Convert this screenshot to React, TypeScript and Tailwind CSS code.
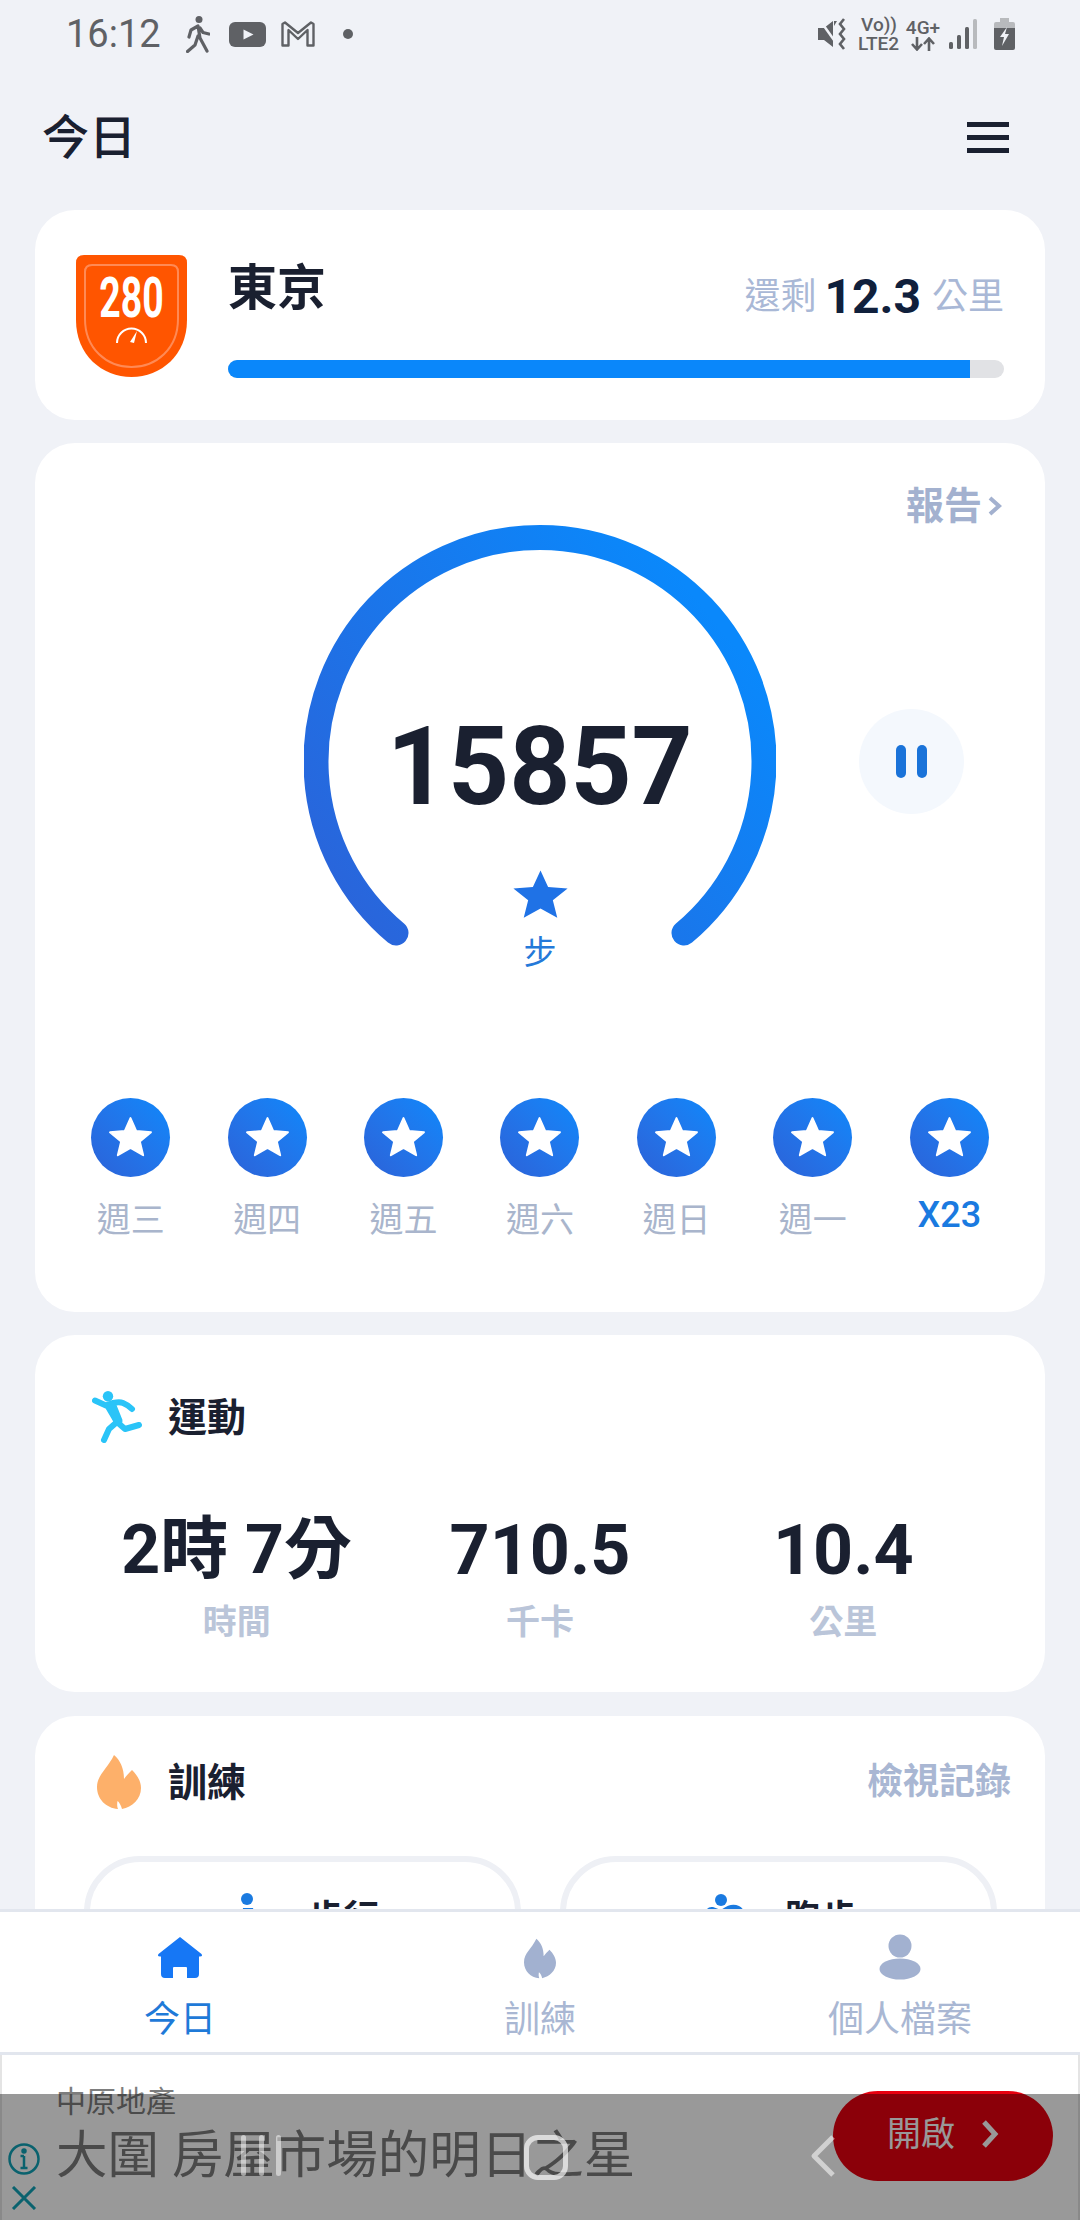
const STAR = "12,1.6 14.94,8.55 22.46,9.2 16.76,14.15 18.47,21.5 12,17.6 5.53,21.5 7.24,14.15 1.54,9.2 9.06,8.55";
const FLAME = "M17 0C23 5 27 13 27 24C29 21 32 18 35 15C40 20 44 26 44 33C44 44 35 52 25 54C24 50 22 47 20.5 46C20 49 20 52 21 54C9 53 0 44 0 32C0 20 11 13 17 0Z";
const DAYS = ["週三", "週四", "週五", "週六", "週日", "週一", "X23"];

function StatusBar() {
  return (
    <div className="flex h-[70px] shrink-0 items-center justify-between pb-[2px] pl-[66px] pr-[65px] text-[#5f6165]">
      <div className="flex items-center">
        <span className="text-[38px] leading-none">16:12</span>
        <svg className="ml-[25px]" width="24" height="37" viewBox="0 0 24 37" fill="none" stroke="#5f6165" strokeWidth="3.2" strokeLinecap="round" strokeLinejoin="round">
          <circle cx="13" cy="3.6" r="3.5" fill="#5f6165" stroke="none" />
          <path d="M12 10L5 14L3 21M12 10L14 22M14 12L17 16.5L23 18M14 22L21 35M12 20L9 29L1.5 35.5" />
        </svg>
        <svg className="ml-[19px]" width="37" height="25" viewBox="0 0 37 25">
          <rect width="37" height="25" rx="6" fill="#5f6165" />
          <path d="M14.5 7.5L24.5 12.5L14.5 17.5Z" fill="#f0f2f7" />
        </svg>
        <svg className="ml-[15px]" width="34" height="26" viewBox="0 0 34 26" fill="none" stroke="#5f6165" strokeWidth="2.4" strokeLinejoin="round">
          <path d="M1.5 24.5V3L4 1.5L17 12L30 1.5L32.5 3V24.5H26.5V9L17 18L7.5 9V24.5Z" />
        </svg>
        <span className="ml-[28px] h-[10px] w-[10px] rounded-full bg-[#5f6165]" />
      </div>
      <div className="flex items-center">
        <svg width="32" height="32" viewBox="0 0 32 32" fill="#5f6165">
          <path d="M0 10H6L15 3V29L6 22H0Z" />
          <path d="M1 1L21 29" stroke="#f0f2f7" strokeWidth="2.5" />
          <path d="M26 1L22 6L26 11L22 16L26 21L22 26L26 31" fill="none" stroke="#5f6165" strokeWidth="2.6" />
          <path d="M19 3L16 8V3Z" />
        </svg>
        <div className="ml-[8px] flex w-[41px] flex-col items-end text-[19px] font-medium leading-[19px]">
          <span className="pr-[2px]">Vo))</span>
          <span>LTE2</span>
        </div>
        <div className="ml-[8px] flex w-[32px] flex-col items-center text-[19px] font-medium leading-[19px]">
          <span>4G+</span>
          <svg width="24" height="14" viewBox="0 0 24 14" fill="none" stroke="#5f6165" strokeWidth="2.6">
            <path d="M6 0V12M1 7L6 12.5L11 7M18 14V2M13 7L18 1.5L23 7" />
          </svg>
        </div>
        <svg className="ml-[10px]" width="28" height="30" viewBox="0 0 28 30">
          <rect x="0" y="23" width="4" height="7" rx="1.5" fill="#5f6165" />
          <rect x="8" y="16" width="4" height="14" rx="1.5" fill="#5f6165" />
          <rect x="16" y="8" width="4" height="22" rx="1.5" fill="#5f6165" />
          <rect x="24" y="0" width="4" height="30" rx="1.5" fill="#b8babd" />
        </svg>
        <svg className="ml-[17px]" width="21" height="32" viewBox="0 0 21 32">
          <path d="M6 0H15V4H19Q21 4 21 6V10H0V6Q0 4 2 4H6Z" fill="#b8babd" />
          <path d="M0 10H21V30Q21 32 19 32H2Q0 32 0 30Z" fill="#5f6165" />
          <path d="M13 9L6 19H10L8 28L15 16H11Z" fill="#f0f2f7" />
        </svg>
      </div>
    </div>
  );
}

function Header() {
  return (
    <div className="flex h-[140px] shrink-0 items-center justify-between pb-[6px] pl-[42px] pr-[71px]">
      <span className="text-[47px] font-medium leading-none text-[#1a2030]">今日</span>
      <div className="flex w-[42px] flex-col gap-[8px]">
        <span className="h-[5px] bg-[#1a2030]" />
        <span className="h-[5px] bg-[#1a2030]" />
        <span className="h-[5px] bg-[#1a2030]" />
      </div>
    </div>
  );
}

function Badge() {
  return (
    <div className="relative h-[122px] w-[111px] shrink-0">
      <svg width="111" height="122" viewBox="0 0 111 122">
        <path d="M8 0H103Q111 0 111 8V65C111 100 85 122 55.5 122C26 122 0 100 0 65V8Q0 0 8 0Z" fill="#ff5500" />
        <path d="M16 10H95Q102 10 102 17V64C102 94 80 112 55.5 112C31 112 9 94 9 64V17Q9 10 16 10Z" fill="none" stroke="#ff8a55" strokeWidth="2" />
        <path d="M41 88A14.5 14.5 0 0 1 70 88" fill="none" stroke="#fff" strokeWidth="2" />
        <path d="M54 87L61 76L58 88Z" fill="#fff" />
      </svg>
      <span className="absolute left-0 top-[16px] w-full scale-x-[0.68] text-center text-[55px] font-bold leading-[55px] text-white">280</span>
    </div>
  );
}

function CityCard() {
  return (
    <div className="flex h-[210px] shrink-0 rounded-[40px] bg-white pl-[41px] pr-[41px] pt-[45px]">
      <Badge />
      <div className="ml-[41px] flex flex-1 flex-col">
        <div className="flex h-[60px] items-start justify-between">
          <span className="pt-[4px] text-[49px] font-bold leading-[60px] text-[#1a2030]">東京</span>
          <div className="flex items-center pt-[19px] text-[36px] leading-[46px] text-[#a9b8d6]">
            <span>還剩</span>
            <span className="ml-[8px] mr-[11px] text-[48px] font-bold text-[#10203c]">12.3</span>
            <span>公里</span>
          </div>
        </div>
        <div className="mt-[45px] h-[18px] overflow-hidden rounded-full bg-[#e1e2e5]">
          <div className="h-full w-[742px] bg-[#0a87fa]" />
        </div>
      </div>
    </div>
  );
}

function Gauge() {
  return (
    <div className="relative mt-[1px] h-[440px] w-full">
      <svg className="mx-auto block" width="472" height="440" viewBox="0 0 472 440" fill="none">
        <defs>
          <linearGradient id="arc" gradientUnits="userSpaceOnUse" x1="60" y1="420" x2="430" y2="120">
            <stop offset="0" stopColor="#2a64da" />
            <stop offset="1" stopColor="#0a88fb" />
          </linearGradient>
        </defs>
        <path d="M92 409A224 224 0 1 1 380 409" stroke="url(#arc)" strokeWidth="25" strokeLinecap="round" />
      </svg>
      <div className="absolute inset-x-0 top-0 flex flex-col items-center pt-[188px]">
        <span className="scale-x-[0.97] text-[110px] font-bold leading-[110px] text-[#1a2030]">15857</span>
        <svg className="mt-[47px]" width="57" height="50" viewBox="1 1 22 21" preserveAspectRatio="none">
          <polygon points={STAR} fill="#1f72e6" />
        </svg>
        <span className="mt-[17px] text-[33px] leading-[33px] text-[#2479d9]">步</span>
      </div>
      <div className="absolute left-[824px] top-[185px] flex h-[105px] w-[105px] items-center justify-center gap-[11px] rounded-full bg-[#f4f8fd]">
        <span className="h-[33px] w-[10px] rounded-full bg-[#1a73d9]" />
        <span className="h-[33px] w-[10px] rounded-full bg-[#1a73d9]" />
      </div>
    </div>
  );
}

function StepsCard() {
  return (
    <div className="mt-[23px] h-[869px] shrink-0 rounded-[40px] bg-white">
      <div className="flex justify-end pr-[43px] pt-[46px] text-[#a3b1cf]">
        <div className="flex h-[34px] items-center gap-[6px] text-[38px] font-bold leading-none">
          <span>報告</span>
          <svg width="14" height="20" viewBox="0 0 14 20" fill="none" stroke="#a3b1cf" strokeWidth="4">
            <path d="M2 2L11 10L2 18" />
          </svg>
        </div>
      </div>
      <Gauge />
      <div className="mt-[134px] grid grid-cols-7 px-[27.5px]">
        {DAYS.map((d, i) => (
          <div key={d} className="flex flex-col items-center">
            <div className="flex h-[79px] w-[79px] items-center justify-center rounded-full bg-linear-to-tr from-[#2b62d8] to-[#0a88fb]">
              <svg width="47" height="45" viewBox="0 0 24 24" preserveAspectRatio="none">
                <polygon points={STAR} fill="#fff" stroke="#fff" strokeWidth="1" strokeLinejoin="round" />
              </svg>
            </div>
            {i === 6 ? (
              <span className="mt-[20px] text-[36px] font-medium leading-[36px] text-[#1a7ae0]">{d}</span>
            ) : (
              <span className="mt-[26px] text-[34px] leading-[34px] text-[#a9b5cc]">{d}</span>
            )}
          </div>
        ))}
      </div>
    </div>
  );
}

function ExerciseCard() {
  return (
    <div className="mt-[23px] h-[357px] shrink-0 rounded-[40px] bg-white pt-[56px]">
      <div className="flex items-center pl-[57px]">
        <svg width="52" height="53" viewBox="0 0 52 53" fill="none" stroke="#2ac4f8" strokeWidth="6" strokeLinecap="round" strokeLinejoin="round">
          <circle cx="16" cy="5.2" r="5.2" fill="#2ac4f8" stroke="none" />
          <path d="M3 9.5L14 14.5C20 12 26 10 31 12C36 14 39 17 40 18M15 14L25 31L33 38L47 34M25 31L17 38L12 49" />
          <path d="M20 15L26 30" strokeWidth="9" />
        </svg>
        <span className="ml-[24px] pt-[2px] text-[39px] font-bold leading-none text-[#1a2030]">運動</span>
      </div>
      <div className="mt-[72px] grid grid-cols-3 px-[50px]">
        <div className="flex flex-col items-center">
          <span className="text-[68px] font-bold leading-[68px] text-[#1a2030]">2時 7分</span>
          <span className="mt-[21px] text-[34px] font-bold leading-[34px] text-[#bac5d9]">時間</span>
        </div>
        <div className="flex flex-col items-center">
          <span className="text-[70px] font-bold leading-[68px] text-[#1a2030]">710.5</span>
          <span className="mt-[21px] text-[34px] font-bold leading-[34px] text-[#bac5d9]">千卡</span>
        </div>
        <div className="flex flex-col items-center">
          <span className="text-[70px] font-bold leading-[68px] text-[#1a2030]">10.4</span>
          <span className="mt-[21px] text-[34px] font-bold leading-[34px] text-[#bac5d9]">公里</span>
        </div>
      </div>
    </div>
  );
}

function TrainingCard() {
  return (
    <div className="mt-[24px] h-[400px] shrink-0 rounded-[40px] bg-white pt-[39px]">
      <div className="flex items-center justify-between pl-[62px] pr-[34px]">
        <div className="flex items-center">
          <svg width="44" height="54" viewBox="0 0 44 54">
            <path d={FLAME} fill="#fdb06a" />
          </svg>
          <span className="ml-[27px] pt-[2px] text-[39px] font-bold leading-none text-[#1a2030]">訓練</span>
        </div>
        <span className="text-[36px] font-bold leading-none text-[#a9b7d3]">檢視記錄</span>
      </div>
      <div className="mt-[47px] grid grid-cols-2 gap-[39px] pl-[49px] pr-[48px]">
        <div className="flex h-[200px] items-start justify-center gap-[40px] rounded-[56px] border-[6px] border-[#eef0f5] pl-[2px] pt-[31px]">
          <svg width="40" height="50" viewBox="0 0 40 50" fill="#1a7ae0">
            <circle cx="20" cy="6" r="6" />
            <path d="M16 15H26L30 30H14Z" />
          </svg>
          <span className="pt-[8px] text-[36px] font-bold leading-[36px] text-[#1a2030]">步行</span>
        </div>
        <div className="flex h-[200px] items-start justify-center gap-[40px] rounded-[56px] border-[6px] border-[#eef0f5] pl-[5px] pt-[31px]">
          <svg width="40" height="50" viewBox="0 0 40 50" fill="#1a7ae0">
            <circle cx="16" cy="7" r="6" />
            <path d="M0 20Q2 13 8 14L16 17Q26 9 34 13Q40 16 40 24H0Z" />
          </svg>
          <span className="pt-[8px] text-[36px] font-bold leading-[36px] text-[#1a2030]">跑步</span>
        </div>
      </div>
    </div>
  );
}

function BottomNav() {
  return (
    <div className="grid h-[146px] shrink-0 grid-cols-3 border-y-[3px] border-[#e2e6ee] bg-white">
      <div className="flex flex-col items-center">
        <svg className="mt-[25px]" width="46" height="41" viewBox="0 0 46 41" fill="#1677f5">
          <path d="M23 0L44.5 17Q46 19.5 43 19.5H42V37Q42 41 38 41H30V31Q30 30 29 30H17Q16 30 16 31V41H8Q4 41 4 37V19.5H3Q0 19.5 1.5 17Z" />
        </svg>
        <span className="mt-[24px] text-[36px] leading-[36px] text-[#1f7ad8]">今日</span>
      </div>
      <div className="flex flex-col items-center">
        <svg className="mt-[26px]" width="32" height="41" viewBox="0 0 44 54">
          <path d={FLAME} fill="#a2b1d0" />
        </svg>
        <span className="mt-[23px] text-[36px] leading-[36px] text-[#a9b7d3]">訓練</span>
      </div>
      <div className="flex flex-col items-center">
        <svg className="mt-[22px]" width="42" height="46" viewBox="0 0 42 46" fill="#a2b1d0">
          <circle cx="21" cy="12" r="11.5" />
          <ellipse cx="21" cy="35" rx="20.5" ry="10.5" />
        </svg>
        <span className="mt-[22px] text-[36px] leading-[36px] text-[#a9b7d3]">個人檔案</span>
      </div>
    </div>
  );
}

function Ad() {
  return (
    <div className="relative flex h-[165px] shrink-0 items-start justify-between border-x-[2px] border-[#e4e4e4] bg-white pl-[54px] pr-[25px]">
      <div className="flex flex-col pt-[32px]">
        <span className="text-[30px] leading-[30px] text-[#7d7d7d]">中原地產</span>
        <span className="mt-[9px] text-[51.5px] leading-[60px] text-[#7c7c7c]">大圍 房屋市場的明日之星</span>
      </div>
      <div className="mt-[36px] flex h-[90px] w-[220px] items-center justify-center gap-[26px] rounded-full bg-[#e8000f] pb-[4px] text-white">
        <span className="text-[34px] leading-none">開啟</span>
        <svg width="18" height="30" viewBox="0 0 18 30" fill="none" stroke="#fff" strokeWidth="5">
          <path d="M3 3L14 15L3 27" />
        </svg>
      </div>
      <svg className="absolute left-[6px] top-[88px]" width="32" height="32" viewBox="0 0 32 32" fill="none" stroke="#12a3b8" strokeWidth="2.5">
        <circle cx="16" cy="16" r="14.5" />
        <path d="M16 13V25M12.5 13H16M12.5 25H19.5" />
        <circle cx="16" cy="8" r="1.5" fill="#12a3b8" />
      </svg>
      <svg className="absolute left-[9px] top-[131px]" width="26" height="24" viewBox="0 0 26 24" fill="none" stroke="#12a3b8" strokeWidth="3">
        <path d="M2 1L24 23M24 1L2 23" />
      </svg>
    </div>
  );
}

function SystemOverlay() {
  return (
    <div className="absolute inset-x-0 bottom-0 flex h-[126px] items-start justify-between bg-black/40 pl-[241px] pr-[244px] pt-[41px]">
      <div className="flex h-[41px] w-[40px] justify-between">
        <span className="w-[5px] rounded-full bg-white/50" />
        <span className="w-[5px] rounded-full bg-white/50" />
        <span className="w-[5px] rounded-full bg-white/50" />
      </div>
      <span className="h-[45px] w-[44px] rounded-[14px] border-[5px] border-white/65" />
      <svg width="26" height="42" viewBox="0 0 26 42" fill="none" stroke="#fff" strokeOpacity="0.55" strokeWidth="5" strokeLinejoin="round">
        <path d="M23 2L4 21L23 40" />
      </svg>
    </div>
  );
}

export default function App() {
  return (
    <div className="relative flex h-[2220px] w-[1080px] flex-col overflow-hidden bg-[#f0f2f7] font-['Roboto','Noto_Sans_CJK_TC',sans-serif]">
      <StatusBar />
      <Header />
      <div className="flex min-h-0 flex-1 flex-col overflow-hidden px-[35px]">
        <CityCard />
        <StepsCard />
        <ExerciseCard />
        <TrainingCard />
      </div>
      <BottomNav />
      <Ad />
      <SystemOverlay />
    </div>
  );
}
